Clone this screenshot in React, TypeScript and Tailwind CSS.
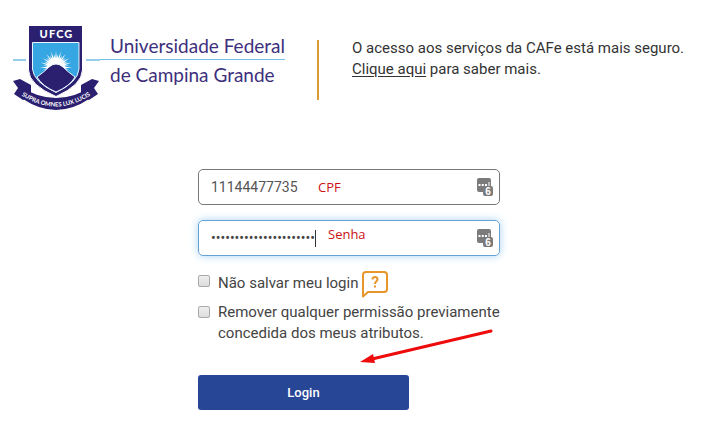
import { useState } from "react";

function Shield() {
  const rays = Array.from({ length: 23 }, (_, i) => {
    const a = Math.PI - 0.2 + (i * (Math.PI + 0.4)) / 22;
    const r = i % 2 ? 16 : 13;
    const x = (rad: number, ang: number) => 43 + rad * Math.cos(ang);
    const y = (rad: number, ang: number) => 43 + rad * Math.sin(ang);
    return `M${x(7, a - 0.14)} ${y(7, a - 0.14)}L${x(r, a)} ${y(r, a)}L${x(7, a + 0.14)} ${y(7, a + 0.14)}Z`;
  }).join("");

  return (
    <svg viewBox="0 0 87 90" className="h-[90px] w-[87px] shrink-0" role="img" aria-label="UFCG">
      <path d="M0 36H13M73 36H87" stroke="#74bfe6" strokeWidth="1.5" />
      {/* ribbon tails and motto band */}
      <path d="M0 57L7 55L18 61V72L10 76L1 70L5 64Z M86 57L79 55L68 61V72L76 76L85 70L81 64Z" fill="#2b1f70" />
      <path d="M6 62Q43 86 80 62L76 75Q43 97 10 75Z" fill="#2b1f70" />
      {/* coat of arms */}
      <path d="M15.500 1.500H69.500V46Q69 61 43 72.500Q16 61 15.500 46Z" fill="#2b1f70" stroke="#fff" strokeWidth="1" />
      <path d="M19.500 18.500H66V45Q65 58 43 68.500Q20.500 58 19.500 45Z" fill="#37a7e3" stroke="#e9f5ff" strokeWidth="1" />
      <path d={rays} fill="#fff" />
      <circle cx="43" cy="43" r="9" fill="#fff" />
      <path d="M24 53Q31 48 36 43Q43 37 50 43Q55 48 62 53Q57 62 43 68Q29 62 24 53Z" fill="#2b1f70" stroke="#e9f5ff" strokeWidth="1" />
      <text x="43.500" y="14" textAnchor="middle" fill="#fff" className="font-['Lato',sans-serif] text-[11px] font-black tracking-widest">UFCG</text>
      <path id="motto" d="M5 69Q43 96 81 69" fill="none" />
      <text fill="#fff" className="font-['Lato',sans-serif] text-[6px] font-bold">
        <textPath href="#motto" startOffset="50%" textAnchor="middle">SUPRA OMNES LUX LUCIS</textPath>
      </text>
    </svg>
  );
}

function PasswordManagerIcon() {
  return (
    <svg viewBox="0 0 16 18" className="pointer-events-none absolute top-[9px] right-[7px] h-[18px] w-4" aria-hidden="true">
      <rect width="14" height="14" rx="2" fill="#7b7b7b" />
      <path d="M1.500 6h2v2h-2zM4.800 6h2v2h-2zM8 6h2v2H8zM11.500 4h1v4h-1z" fill="#fff" />
      <rect x="6" y="8" width="10" height="10" rx="2" fill="#7b7b7b" />
      <text x="11" y="17" textAnchor="middle" fill="#fff" className="font-['Liberation_Sans',sans-serif] text-[10px] font-bold">6</text>
    </svg>
  );
}

export default function App() {
  const [cpf, setCpf] = useState("11144477735");
  const [password, setPassword] = useState("senha-de-exemplo-12345");

  return (
    <div className="min-h-screen bg-white font-['Roboto',sans-serif] text-[15px] text-[#444]">
      <header className="flex px-[13px] pt-6">
        <Shield />
        <div className="pt-[9px] font-['Lato',sans-serif] text-[19px] leading-[26px] text-[#3d2f7c]">
          <div className="border-b border-[#74bfe6] pl-[10px]">Universidade Federal</div>
          <div className="pt-[2px] pl-[10px]">de Campina Grande</div>
        </div>
        <div className="mt-4 ml-8 h-[60px] w-[2px] shrink-0 bg-[#d99c34]" />
        <p className="ml-[33px] pt-[14px] leading-[21px] text-[#333]">
          O acesso aos serviços da CAFe está mais seguro.
          <br />
          <a href="#saber-mais" className="underline underline-offset-2">Clique aqui</a> para saber mais.
        </p>
      </header>

      <main className="mt-[55px] pr-4 pl-[198px]">
        <form className="max-w-[302px]" onSubmit={(e) => e.preventDefault()}>
          <div className="relative">
            <input
              type="text"
              aria-label="CPF"
              value={cpf}
              onChange={(e) => setCpf(e.target.value)}
              className="block h-9 w-full rounded-[5px] border border-[#777] px-3 text-[14px] text-[#555] outline-none"
            />
            <span className="pointer-events-none absolute top-2 left-[120px] font-['Open_Sans',sans-serif] text-[13px] leading-5 text-[#cc1016]">CPF</span>
            <PasswordManagerIcon />
          </div>

          <div className="relative mt-[15px]">
            <input
              type="password"
              aria-label="Senha"
              value={password}
              onChange={(e) => setPassword(e.target.value)}
              className="block h-9 w-full rounded-[5px] border border-[#66a3d5] px-3 text-[14px] text-[#444] caret-transparent shadow-[0_0_8px_#a9d3f5] outline-none"
            />
            <span className="absolute top-[10px] left-[117px] h-[17px] w-px bg-[#333]" />
            <span className="pointer-events-none absolute top-1 left-[130px] font-['Open_Sans',sans-serif] text-[13px] leading-5 text-[#cc1016]">Senha</span>
            <PasswordManagerIcon />
          </div>

          <div className="mt-[15px] flex items-start">
            <input
              id="nao-salvar"
              type="checkbox"
              className="mt-1 h-3 w-3 shrink-0 appearance-none rounded-[2px] border border-[#aaa] bg-linear-to-b from-[#eee] to-[#ddd] checked:bg-[#274696]"
            />
            <label htmlFor="nao-salvar" className="pt-[2px] pl-2 leading-[21px]">Não salvar meu login</label>
            <button type="button" aria-label="Ajuda" className="ml-1">
              <svg viewBox="0 0 26 27" className="h-[27px] w-[26px]" fill="none" stroke="#e8962a" strokeWidth="2">
                <path d="M1 25.500V4Q1 1 4 1H22Q25 1 25 4V18Q25 21 22 21H6Z" strokeLinejoin="round" />
                <path d="M10.500 8.500Q10.500 6 13 6T15.500 8.500Q15.500 9.500 14.200 10.500Q13 11.500 13 13M13 14.500V16.500" />
              </svg>
            </button>
          </div>

          <div className="mt-1 flex items-start">
            <input
              id="remover"
              type="checkbox"
              className="mt-1 h-3 w-3 shrink-0 appearance-none rounded-[2px] border border-[#aaa] bg-linear-to-b from-[#eee] to-[#ddd] checked:bg-[#274696]"
            />
            <label htmlFor="remover" className="pl-2 leading-[21px]">
              Remover qualquer permissão previamente concedida dos meus atributos.
            </label>
          </div>

          <div className="relative mt-[31px]">
            <button type="submit" className="h-[35px] w-[211px] rounded-[3px] bg-[#274696] text-[13px] font-medium text-white">
              Login
            </button>
            {/* arrow pointing at the login button */}
            <svg viewBox="0 0 134 36" className="pointer-events-none absolute -top-[46px] left-[162px] h-9 w-[134px]" aria-hidden="true">
              <path d="M12 30L131 2" stroke="#ee0b0b" strokeWidth="3" strokeLinecap="round" />
              <path d="M0 33L13 25L15 34Z" fill="#ee0b0b" />
            </svg>
          </div>
        </form>
      </main>
    </div>
  );
}
